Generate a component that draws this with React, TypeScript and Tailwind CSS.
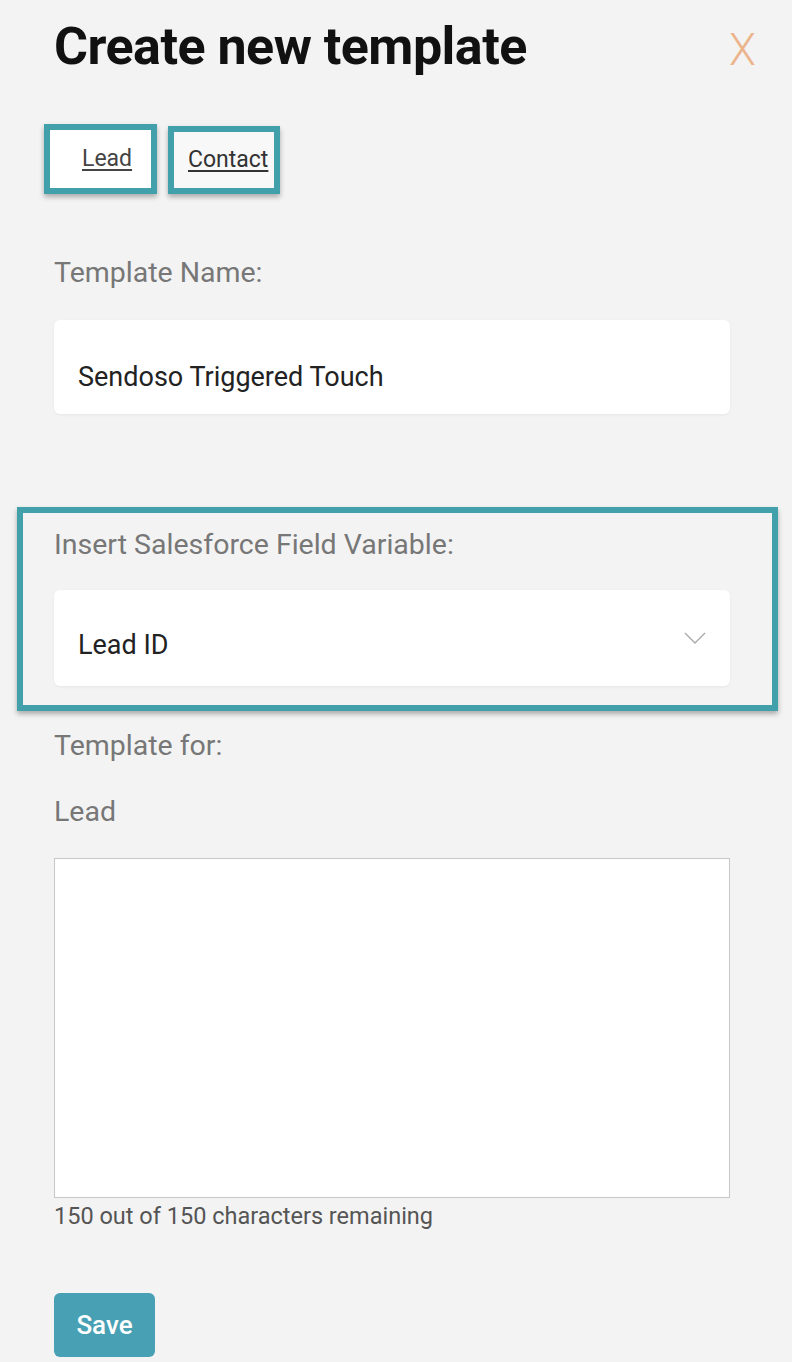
import React from 'react';

const teal = 'border-[6px] border-[#41a0a9] shadow-[0_3px_5px_rgba(0,0,0,0.3)]';

export default function App() {
  return (
    <div className="min-h-[1362px] w-[792px] bg-[#f3f3f3] font-['Roboto',sans-serif]">
      <div className="pl-[54px] pr-[62px] pt-[18px]">
        {/* header */}
        <div className="flex items-start justify-between">
          <h1 className="text-[52px] font-bold leading-[58px] tracking-[-0.01em] text-[#111]">Create new template</h1>
          <span className="mt-[10px] mr-[-26px] text-[44px] font-light leading-none text-[#ecb48a]">X</span>
        </div>

        {/* tabs */}
        <div className="mt-[48px] -ml-[10px] flex items-start gap-[11px]">
          <div className={`${teal} flex h-[70px] w-[113px] items-center bg-white pl-[32px]`}>
            <a className="text-[23px] text-[#444] underline underline-offset-[3px]">Lead</a>
          </div>
          <div className={`${teal} mt-[2px] flex h-[68px] w-[112px] items-center bg-[#f8f8f8] pl-[14px]`}>
            <a className="text-[23px] text-[#333] underline underline-offset-[3px]">Contact</a>
          </div>
        </div>

        {/* template name */}
        <p className="mt-[63px] text-[28.5px] leading-[32px] text-[#777]">Template Name:</p>
        <div className="mt-[31px] flex h-[94px] w-[676px] items-center rounded-[6px] bg-white pl-[24px] shadow-[0_1px_3px_rgba(0,0,0,0.06)]">
          <span className="mt-[20px] text-[27px] leading-[32px] text-[#222]">Sendoso Triggered Touch</span>
        </div>

        {/* salesforce field */}
        <div className={`${teal} mt-[93px] -ml-[37px] w-[761px] pl-[31px] pr-[42px] pt-[16px] pb-[19px]`}>
          <p className="text-[28.5px] leading-[32px] text-[#777]">Insert Salesforce Field Variable:</p>
          <div className="mt-[29px] flex h-[96px] items-center justify-between rounded-[6px] bg-white pl-[24px] pr-[24px] shadow-[0_1px_3px_rgba(0,0,0,0.06)]">
            <span className="mt-[14px] text-[27px] leading-[32px] text-[#222]">Lead ID</span>
            <svg width="22" height="12" viewBox="0 0 22 12">
              <path d="M1 1 L11 11 L21 1" fill="none" stroke="#aaa" strokeWidth="1.4" />
            </svg>
          </div>
        </div>

        {/* template for */}
        <p className="mt-[19px] text-[28.5px] leading-[32px] text-[#777]">Template for:</p>
        <p className="mt-[34px] text-[28.5px] leading-[32px] text-[#777]">Lead</p>
        <textarea className="mt-[30px] block h-[340px] w-[676px] resize-none border border-[#c8c8c8] bg-white" />
        <p className="mt-[5px] text-[23.5px] leading-[26px] text-[#555]">150 out of 150 characters remaining</p>

        <button className="mt-[64px] h-[64px] w-[101px] rounded-[6px] bg-[#48a0b4] text-[26px] font-medium text-white">Save</button>
      </div>
    </div>
  );
}
